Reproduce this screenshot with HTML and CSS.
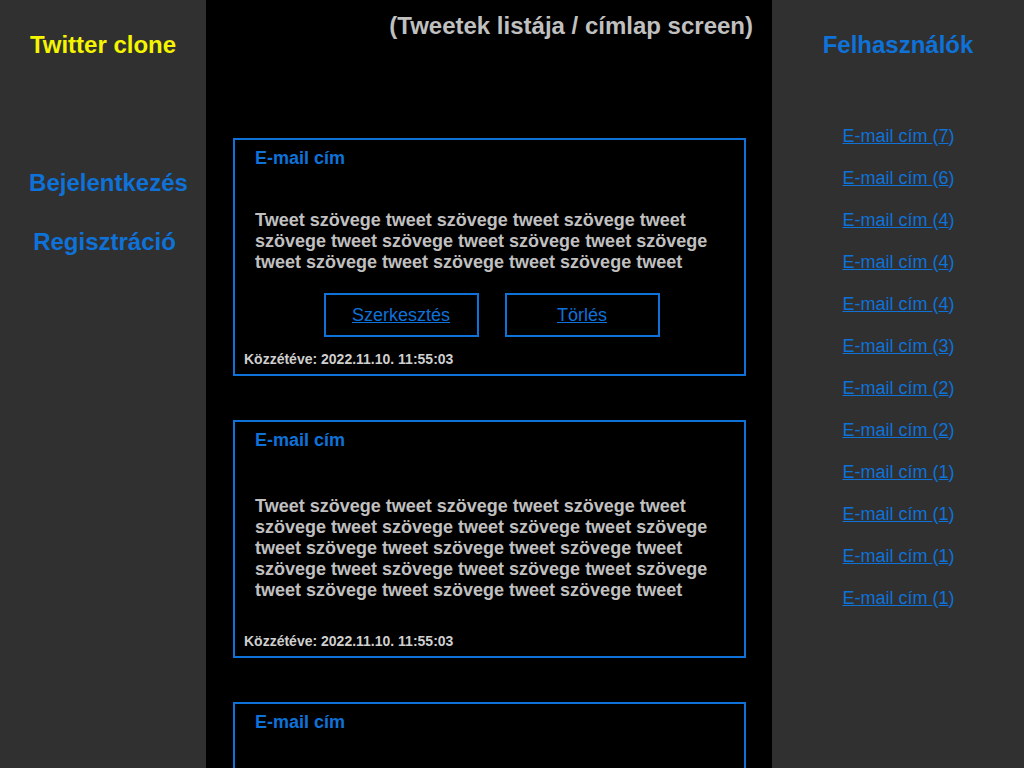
FILE: index.html
```html
<!DOCTYPE html>
<html lang="hu">
<head>
<meta charset="utf-8">
<title>Twitter clone</title>
<link rel="stylesheet" href="styles.css">
</head>
<body>
<div class="app">
  <aside class="side side--left">
    <h1 class="brand">Twitter clone</h1>
    <nav class="nav">
      <a class="nav-link nav-link--login" href="#">Bejelentkezés</a>
      <a class="nav-link nav-link--register" href="#">Regisztráció</a>
    </nav>
  </aside>

  <main class="main">
    <h2 class="page-title">(Tweetek listája / címlap screen)</h2>

    <article class="card">
      <div class="card-author">E-mail cím</div>
      <p class="tweet-text">Tweet szövege tweet szövege tweet szövege tweet szövege tweet szövege tweet szövege tweet szövege tweet szövege tweet szövege tweet szövege tweet</p>
      <div class="actions">
        <div class="btn"><a href="#">Szerkesztés</a></div>
        <div class="btn"><a href="#">Törlés</a></div>
      </div>
      <div class="card-date">Közzétéve: 2022.11.10. 11:55:03</div>
    </article>

    <article class="card">
      <div class="card-author">E-mail cím</div>
      <p class="tweet-text tweet-text--solo">Tweet szövege tweet szövege tweet szövege tweet szövege tweet szövege tweet szövege tweet szövege tweet szövege tweet szövege tweet szövege tweet szövege tweet szövege tweet szövege tweet szövege tweet szövege tweet szövege tweet szövege tweet</p>
      <div class="card-date">Közzétéve: 2022.11.10. 11:55:03</div>
    </article>

    <article class="card">
      <div class="card-author">E-mail cím</div>
      <p class="tweet-text tweet-text--solo">Tweet szövege tweet szövege tweet szövege tweet</p>
      <div class="card-date">Közzétéve: 2022.11.10. 11:55:03</div>
    </article>
  </main>

  <aside class="side side--right">
    <h2 class="users-title">Felhasználók</h2>
    <ul class="users">
      <li><a href="#">E-mail cím </a>(<a href="#">7</a>)</li>
      <li><a href="#">E-mail cím </a>(<a href="#">6</a>)</li>
      <li><a href="#">E-mail cím </a>(<a href="#">4</a>)</li>
      <li><a href="#">E-mail cím </a>(<a href="#">4</a>)</li>
      <li><a href="#">E-mail cím </a>(<a href="#">4</a>)</li>
      <li><a href="#">E-mail cím </a>(<a href="#">3</a>)</li>
      <li><a href="#">E-mail cím </a>(<a href="#">2</a>)</li>
      <li><a href="#">E-mail cím </a>(<a href="#">2</a>)</li>
      <li><a href="#">E-mail cím </a>(<a href="#">1</a>)</li>
      <li><a href="#">E-mail cím </a>(<a href="#">1</a>)</li>
      <li><a href="#">E-mail cím </a>(<a href="#">1</a>)</li>
      <li><a href="#">E-mail cím </a>(<a href="#">1</a>)</li>
    </ul>
  </aside>
</div>
</body>
</html>
```

FILE: styles.css
```css
* {
  box-sizing: border-box;
}

html, body {
  margin: 0;
  padding: 0;
  background: #000;
}

body {
  font-family: "Liberation Sans", Arial, sans-serif;
}

.app {
  display: grid;
  grid-template-columns: 206px 566px 252px;
  height: 768px;
  overflow: hidden;
}

.side {
  background: #303030;
  text-align: center;
}

.brand {
  margin: 31px 0 0;
  font-size: 24px;
  line-height: 28px;
  font-weight: bold;
  color: #f5f500;
}

.nav {
  display: flex;
  flex-direction: column;
  align-items: center;
  gap: 31px;
  margin-top: 110px;
}

.nav-link {
  font-size: 24px;
  line-height: 28px;
  font-weight: bold;
  color: #0e72d8;
  text-decoration: none;
}

.nav-link--login {
  margin-left: 11px;
}

.nav-link--register {
  margin-left: 3px;
}

.main {
  background: #000;
  padding: 12px 26px 0 27px;
  overflow: hidden;
}

.page-title {
  margin: 0 -7px 98px 0;
  text-align: right;
  font-size: 24px;
  line-height: 28px;
  font-weight: bold;
  color: #c0c0c0;
}

.card {
  display: flex;
  flex-direction: column;
  height: 238px;
  margin-bottom: 44px;
  border: 2px solid #0e72d8;
  padding: 8px 9px 7px;
}

.card-author {
  margin-left: 11px;
  font-size: 18px;
  line-height: 21px;
  font-weight: bold;
  color: #0e72d8;
}

.tweet-text {
  margin: 41px 11px 0;
  font-size: 18px;
  line-height: 21px;
  font-weight: bold;
  color: #c0c0c0;
}

.tweet-text--solo {
  margin-top: 45px;
}

.actions {
  display: flex;
  justify-content: center;
  gap: 26px;
  margin-top: 20px;
  padding-left: 4px;
}

.btn {
  display: flex;
  align-items: center;
  justify-content: center;
  width: 155px;
  height: 44px;
  border: 2px solid #0e72d8;
}

.btn a {
  font-size: 18px;
  color: #0e72d8;
  text-decoration: underline;
}

.card-date {
  margin-top: auto;
  font-size: 14px;
  line-height: 16px;
  font-weight: bold;
  color: #cfcfcf;
}

.users-title {
  margin: 31px 0 0;
  font-size: 24px;
  line-height: 28px;
  font-weight: bold;
  color: #0e72d8;
}

.users {
  list-style: none;
  margin: 67px 0 0 1px;
  padding: 0;
}

.users li {
  font-size: 18px;
  line-height: 21px;
  margin-bottom: 21px;
  color: #0e72d8;
}

.users a {
  color: #0e72d8;
  text-decoration: underline;
}
```
